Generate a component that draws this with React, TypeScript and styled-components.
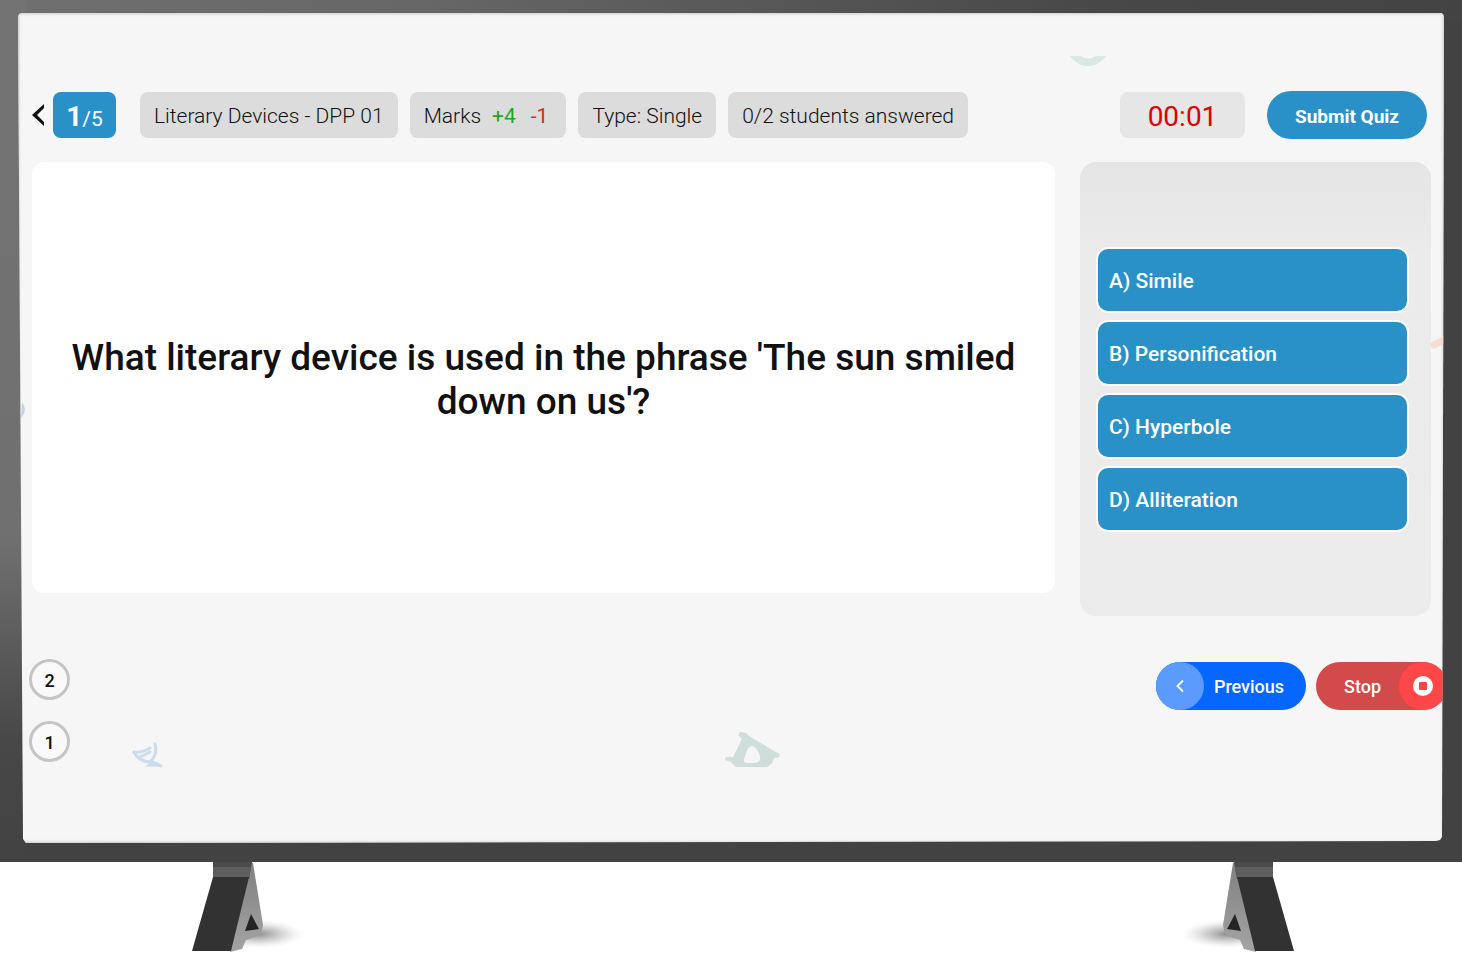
import React from "react";
import styled, { createGlobalStyle } from "styled-components";

const GlobalStyle = createGlobalStyle`
  *, *::before, *::after { box-sizing: border-box; }
  body {
    margin: 0;
    background: #fff;
    color: #111;
    font-family: Roboto, "Liberation Sans", sans-serif;
  }
  button { font-family: inherit; border: 0; cursor: pointer; }
`;

const Television = styled.div`
  padding: 13px 18px 19px;
  background:
    linear-gradient(180deg, #737373 0, #707070 540px, #484848 740px, #424242 100%) left / 26px 100% no-repeat,
    linear-gradient(90deg, #707070 0, #666 30%, #484848 75%, #434343 100%) top / 100% 20px no-repeat,
    #424242;
`;

const Screen = styled.div`
  position: relative;
  padding: 78px 13px 81px 14px;
  background: #f6f6f6;
  box-shadow: inset 0 0 3px 1px #c9c9c9;
  clip-path: polygon(
    0 4px, 1px 1px, 4px 0,
    calc(100% - 3px) 0, calc(100% - 1px) 1px, 100% 4px,
    calc(100% - 2px) calc(100% - 6px), calc(100% - 4px) calc(100% - 3px), calc(100% - 8px) calc(100% - 2px),
    8px 100%, 5px calc(100% - 4px)
  );
`;

const Decoration = styled.svg<{ $left: string; $top: number }>`
  position: absolute;
  left: ${(p) => p.$left};
  top: ${(p) => p.$top}px;
`;

const Header = styled.header`
  display: flex;
  align-items: center;
  height: 48px;
  padding-right: 4px;
`;

const BackButton = styled.button`
  display: flex;
  width: 21px;
  padding: 0;
  background: none;
`;

const Counter = styled.div`
  display: flex;
  align-items: baseline;
  justify-content: center;
  width: 63px;
  height: 46px;
  margin-right: 24px;
  border-radius: 8px;
  background: #2a91c8;
  color: #fff;
  font-size: 21px;
  line-height: 50px;
`;

const Current = styled.strong`
  font-size: 28px;
  font-weight: 700;
`;

const Chips = styled.div`
  display: flex;
  flex: 1;
  gap: 12px;
`;

const Chip = styled.div<{ $wide?: boolean }>`
  display: flex;
  gap: 11px;
  height: 46px;
  padding: 0 ${(p) => (p.$wide ? 18 : 14)}px 0 14px;
  border-radius: 8px;
  background: #dcdcdc;
  font-size: 21px;
  font-weight: 300;
  line-height: 48px;
  white-space: nowrap;
`;

const Mark = styled.span<{ $negative?: boolean }>`
  color: ${(p) => (p.$negative ? "#dd2a1b" : "#25a425")};
  font-weight: 400;
  & + & { margin-left: 4px; }
`;

const Timer = styled.div`
  width: 125px;
  height: 46px;
  margin-right: 22px;
  border-radius: 8px;
  background: #e6e6e6;
  color: #e00000;
  font-size: 28px;
  line-height: 50px;
  text-align: center;
`;

const SubmitButton = styled.button`
  width: 160px;
  height: 48px;
  padding: 2px 0 0;
  border-radius: 24px;
  background: #2a91c8;
  color: #fff;
  font-size: 19px;
  font-weight: 700;
`;

const Main = styled.main`
  display: flex;
  align-items: flex-start;
  gap: 25px;
  margin-top: 23px;
`;

const QuestionCard = styled.section`
  display: flex;
  flex: 1;
  align-items: center;
  justify-content: center;
  min-height: 431px;
  padding: 4px 36px 0;
  border-radius: 12px;
  background: #fff;
`;

const Question = styled.h1`
  margin: 0;
  font-size: 37px;
  font-weight: 500;
  line-height: 44px;
  text-align: center;
`;

const OptionPanel = styled.section`
  display: flex;
  flex: 0 0 351px;
  flex-direction: column;
  justify-content: center;
  gap: 7px;
  min-height: 454px;
  padding: 0 22px 0 16px;
  border-radius: 16px;
  background: linear-gradient(180deg, #e5e5e5 0, #ebebeb 20%, #ececec 100%);
`;

const OptionButton = styled.button`
  height: 66px;
  padding: 2px 11px 0;
  border: 2px solid #fcfcfc;
  border-radius: 12px;
  background: #2a91c8;
  color: #fff;
  font-size: 21px;
  font-weight: 500;
  text-align: left;
`;

const Footer = styled.footer`
  display: flex;
  align-items: flex-start;
  justify-content: space-between;
  margin-top: 43px;
`;

const PageList = styled.nav`
  display: flex;
  flex-direction: column;
  gap: 21px;
  margin-left: -3px;
`;

const PageButton = styled.button`
  width: 41px;
  height: 41px;
  padding: 2px 0 0;
  border: 3px solid #c5c5c5;
  border-radius: 50%;
  background: #f9f9f9;
  color: #111;
  font-size: 18px;
  font-weight: 500;
`;

const Actions = styled.div`
  display: flex;
  gap: 10px;
  margin: 3px -16px 0 0;
`;

const ActionButton = styled.button<{ $stop?: boolean }>`
  display: flex;
  align-items: center;
  width: ${(p) => (p.$stop ? 131 : 150)}px;
  height: 48px;
  padding: ${(p) => (p.$stop ? "0 0 0 10px" : "0 12px 0 0")};
  border-radius: 24px;
  background: ${(p) => (p.$stop ? "#d34a4a" : "#0567ff")};
  color: #fff;
  font-size: 18px;
  font-weight: 500;
`;

const ActionLabel = styled.span`
  flex: 1;
  text-align: center;
`;

const Knob = styled.span<{ $stop?: boolean }>`
  display: flex;
  align-items: center;
  justify-content: center;
  width: 48px;
  height: 48px;
  border-radius: 50%;
  background: ${(p) => (p.$stop ? "#ff474a" : "#5b9bfd")};
`;

const Stands = styled.div`
  display: flex;
  justify-content: space-between;
  padding: 0 168px 0 192px;
`;

const StandDrawing = styled.svg<{ $mirrored?: boolean }>`
  display: block;
  transform: ${(p) => (p.$mirrored ? "scaleX(-1)" : "none")};
`;

const Stand = ({ id, mirrored }: { id: string; mirrored?: boolean }) => (
  <StandDrawing width="114" height="90" viewBox="0 0 114 90" $mirrored={mirrored} aria-hidden="true">
    <defs>
      <radialGradient id={`${id}-shadow`}>
        <stop offset="0" stopColor="#888" />
        <stop offset="0.5" stopColor="#b4b4b4" stopOpacity="0.6" />
        <stop offset="1" stopColor="#ddd" stopOpacity="0" />
      </radialGradient>
      <linearGradient id={`${id}-leg`} x1="0" y1="0" x2="0" y2="1">
        <stop offset="0" stopColor="#808080" />
        <stop offset="1" stopColor="#a4a4a4" />
      </linearGradient>
    </defs>
    <ellipse cx="66" cy="72" rx="46" ry="14" fill={`url(#${id}-shadow)`} />
    <path d="M58 0 L61 1 L71 63 L69 73 L54 78 L50 87 L38 90 L52 20 Z" fill={`url(#${id}-leg)`} />
    <path d="M59 52 L67 67 L53 69 Z" fill="#242424" />
    <path d="M21 0 H60 L57 17 H21 Z" fill="#4a4a4a" />
    <path d="M21 5 H59 L57 15 H21 Z" fill="#5e5e5e" />
    <path d="M21 15 H57 L39 89 H0 Z" fill="#323232" />
  </StandDrawing>
);

const options = ["A) Simile", "B) Personification", "C) Hyperbole", "D) Alliteration"];

export default function App() {
  return (
    <>
      <GlobalStyle />
      <Television>
        <Screen>
          <Decoration $left="calc(74% - 4px)" $top={43} width="38" height="10" viewBox="0 0 38 10" aria-hidden="true">
            <path d="M1 0 H12 Q19 5 27 0 H37 Q30 10 19 10 Q8 10 1 0 Z" fill="#d9e8e3" />
          </Decoration>
          <Decoration $left="8%" $top={729} width="33" height="26" viewBox="0 0 33 26" aria-hidden="true">
            <g fill="none" stroke="#cbdcec" strokeWidth="3" strokeLinecap="round">
              <path d="M23 2 Q26 12 18 20" />
              <path d="M2 10 Q10 11 18 6" />
              <path d="M2 10 Q7 20 19 20 Q24 21 29 24" />
              <path d="M8 15 L18 10" />
            </g>
            <path d="M13 24.500 L20 19 L31 24.500 Z" fill="#cbdcec" />
          </Decoration>
          <Decoration $left="calc(50% - 7px)" $top={718} width="58" height="38" viewBox="0 0 58 38" aria-hidden="true">
            <path
              fillRule="evenodd"
              d="M16 1 L22 2 L25 5 L50 20 L56 23 L55 26 L50 27 L48 32 L43 36 H12 L7 31 L1 29 L2 26 L9 26 L18 8 L14 4 Z M24 17 Q28 13 32 17 Q37 24 36 29 Q35 32 28 32 L22 32 Q19 31 20 28 Z"
              fill="#d0dedb"
            />
          </Decoration>
          <Decoration $left="calc(100% - 14px)" $top={322} width="14" height="14" viewBox="0 0 14 14" aria-hidden="true">
            <path d="M4 10 L14 5" stroke="#f6ddd4" strokeWidth="7" strokeLinecap="round" />
          </Decoration>
          <Decoration $left="1px" $top={388} width="6" height="18" viewBox="0 0 6 18" aria-hidden="true">
            <path d="M3 1 Q9 9 2 17 Z" fill="#c4d3e6" />
          </Decoration>

          <Header>
            <BackButton aria-label="Back">
              <svg width="13" height="24" viewBox="0 0 13 24" aria-hidden="true">
                <path d="M12 1 V5 L5 12 L12 19 V23 L0 12 Z" fill="#111" />
              </svg>
            </BackButton>
            <Counter>
              <Current>1</Current>/5
            </Counter>
            <Chips>
              <Chip>Literary Devices - DPP 01</Chip>
              <Chip $wide>
                Marks <Mark>+4</Mark>
                <Mark $negative>-1</Mark>
              </Chip>
              <Chip>Type: Single</Chip>
              <Chip>0/2 students answered</Chip>
            </Chips>
            <Timer>00:01</Timer>
            <SubmitButton>Submit Quiz</SubmitButton>
          </Header>

          <Main>
            <QuestionCard>
              <Question>What literary device is used in the phrase 'The sun smiled down on us'?</Question>
            </QuestionCard>
            <OptionPanel>
              {options.map((option) => (
                <OptionButton key={option}>{option}</OptionButton>
              ))}
            </OptionPanel>
          </Main>

          <Footer>
            <PageList aria-label="Pages">
              <PageButton>2</PageButton>
              <PageButton>1</PageButton>
            </PageList>
            <Actions>
              <ActionButton>
                <Knob>
                  <svg width="8" height="14" viewBox="0 0 8 14" fill="none" aria-hidden="true">
                    <path d="M7 1.500 L1.500 7 L7 12.500" stroke="#fff" strokeWidth="1.800" />
                  </svg>
                </Knob>
                <ActionLabel>Previous</ActionLabel>
              </ActionButton>
              <ActionButton $stop>
                <ActionLabel>Stop</ActionLabel>
                <Knob $stop>
                  <svg width="20" height="20" viewBox="0 0 20 20" aria-hidden="true">
                    <circle cx="10" cy="10" r="10" fill="#fff" />
                    <rect x="6" y="6" width="8" height="8" rx="1" fill="#ef4649" />
                  </svg>
                </Knob>
              </ActionButton>
            </Actions>
          </Footer>
        </Screen>
      </Television>
      <Stands>
        <Stand id="left" />
        <Stand id="right" mirrored />
      </Stands>
    </>
  );
}
